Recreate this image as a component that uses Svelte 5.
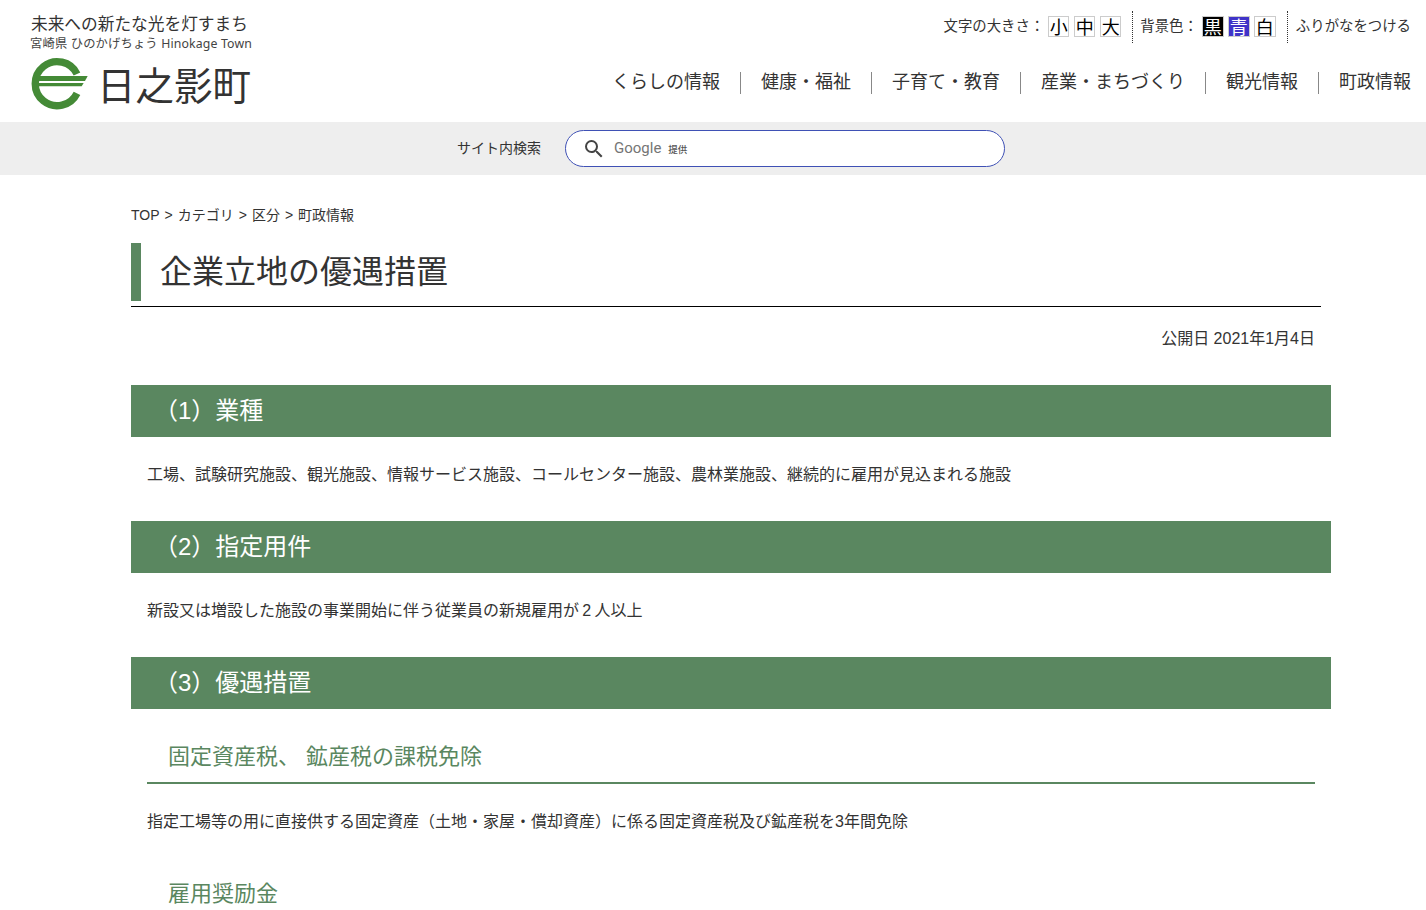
<script lang="ts">
    const sizes = ["小", "中", "大"];
    const colors = [
        { label: "黒", cls: "black" },
        { label: "青", cls: "blue" },
        { label: "白", cls: "white" },
    ];
    const nav = ["くらしの情報", "健康・福祉", "子育て・教育", "産業・まちづくり", "観光情報", "町政情報"];
    const crumbs = ["TOP", "カテゴリ", "区分", "町政情報"];
</script>

<header class="header">
    <div class="brand">
        <p class="tagline">未来への新たな光を灯すまち</p>
        <p class="town">宮崎県 ひのかげちょう Hinokage Town</p>
        <div class="logo">
            <svg class="mark" viewBox="0 0 210 186" aria-hidden="true">
                <path d="M156 66A66 66 0 1 0 156 124" fill="none" stroke="#448a36" stroke-width="22" />
                <polygon points="35,72 188,72 180,87 35,87" fill="#448a36" />
                <polygon points="35,93 176,93 170,103 35,103" fill="#448a36" />
            </svg>
            <span class="wordmark">日之影町</span>
        </div>
    </div>
    <div class="header-right">
        <div class="tools">
            <div class="tool-group">
                <span class="tool-label">文字の大きさ：</span>
                <div class="size-btns">
                    {#each sizes as s}
                        <span class="tool-btn">{s}</span>
                    {/each}
                </div>
            </div>
            <div class="tool-group dotted">
                <span class="tool-label">背景色：</span>
                <div class="color-btns">
                    {#each colors as c}
                        <span class="tool-btn {c.cls}">{c.label}</span>
                    {/each}
                </div>
            </div>
            <div class="tool-group dotted">
                <span class="tool-label">ふりがなをつける</span>
            </div>
        </div>
        <nav class="nav">
            {#each nav as item}
                <span class="nav-item">{item}</span>
            {/each}
        </nav>
    </div>
</header>

<div class="searchbar">
    <span class="search-label">サイト内検索</span>
    <div class="search-box">
        <svg class="search-icon" viewBox="0 0 24 24" aria-hidden="true">
            <path d="M15.5 14h-.79l-.28-.27A6.47 6.47 0 0 0 16 9.5 6.5 6.5 0 1 0 9.5 16c1.61 0 3.09-.59 4.23-1.57l.27.28v.79l5 4.99L20.49 19l-4.99-5zm-6 0C7.01 14 5 11.99 5 9.5S7.01 5 9.5 5 14 7.01 14 9.5 11.99 14 9.5 14z" />
        </svg>
        <span class="google">Google</span>
        <span class="provided">提供</span>
    </div>
</div>

<main class="main">
    <div class="breadcrumb">
        {#each crumbs as c, i}
            {#if i > 0}<span class="sep">&gt;</span>{/if}
            <span>{c}</span>
        {/each}
    </div>

    <h1 class="title"><span>企業立地の優遇措置</span></h1>
    <p class="date">公開日 2021年1月4日</p>

    <h2 class="section first">（1）業種</h2>
    <p class="body">工場、試験研究施設、観光施設、情報サービス施設、コールセンター施設、農林業施設、継続的に雇用が見込まれる施設</p>

    <h2 class="section">（2）指定用件</h2>
    <p class="body tight">新設又は増設した施設の事業開始に伴う従業員の新規雇用が 2 人以上</p>

    <h2 class="section">（3）優遇措置</h2>
    <h3 class="sub">固定資産税、 鉱産税の課税免除</h3>
    <p class="body">指定工場等の用に直接供する固定資産（土地・家屋・償却資産）に係る固定資産税及び鉱産税を3年間免除</p>
    <h3 class="sub">雇用奨励金</h3>
</main>

<style>
    :global(body) {
        margin: 0;
        background: #fff;
        color: #333;
        font-family: "Liberation Sans", "Noto Sans CJK JP", sans-serif;
        font-size: 16px;
        height: 910px;
        overflow: hidden;
    }

    p,
    h1,
    h2,
    h3 {
        margin: 0;
        font-weight: 400;
    }

    .header {
        display: flex;
        justify-content: space-between;
        height: 122px;
        padding: 0 15px 0 30px;
    }

    .brand {
        padding-top: 14px;
    }

    .tagline {
        margin-left: 1px;
        padding-top: 1px;
        font-size: 16.7px;
        line-height: 19px;
    }

    .town {
        font-family: "Noto Sans", "Noto Sans CJK JP", sans-serif;
        font-size: 12.3px;
        line-height: 18px;
        margin-top: 1px;
        color: #444;
        letter-spacing: 0.15px;
    }

    .logo {
        display: flex;
        align-items: center;
        margin-top: -1px;
        height: 62px;
    }

    .mark {
        width: 70px;
        height: 62px;
        margin-left: -5px;
    }

    .wordmark {
        font-size: 38.5px;
        line-height: 1;
        margin-left: 2px;
        font-family: "Noto Sans CJK JP", sans-serif;
        font-weight: 400;
    }

    .header-right {
        display: flex;
        flex-direction: column;
        align-items: flex-end;
    }

    .tools {
        display: flex;
        align-items: center;
        height: 32px;
        margin-top: 11px;
    }

    .tool-group {
        display: flex;
        align-items: center;
        box-sizing: border-box;
        height: 32px;
        padding-bottom: 2px;
        font-size: 14.4px;
    }

    .tool-label {
        padding-bottom: 4px;
    }

    .dotted {
        margin-left: 11px;
        padding-left: 7px;
        border-left: 1px dotted #333;
    }

    .dotted:last-child {
        padding-left: 8px;
    }

    .size-btns,
    .color-btns {
        display: flex;
        gap: 5px;
        margin-left: 4px;
    }

    .color-btns {
        gap: 4px;
    }

    .tool-btn {
        display: flex;
        align-items: center;
        justify-content: center;
        box-sizing: border-box;
        width: 21px;
        height: 21px;
        border: 1px solid #ccc;
        font-size: 18px;
        color: #000;
    }

    .color-btns .tool-btn {
        width: 22px;
    }

    .tool-btn.black {
        background: #000;
        color: #fff;
    }

    .tool-btn.blue {
        background: #3f33c8;
        color: #fff;
    }

    .nav {
        display: flex;
        align-items: center;
        margin-top: 29px;
    }

    .nav-item {
        font-size: 18px;
        line-height: 20px;
        padding: 0 20px 2px;
        border-left: 1px solid #888;
    }

    .nav-item:first-child {
        border-left: none;
    }

    .nav-item:last-child {
        padding-right: 0;
    }

    .searchbar {
        display: flex;
        align-items: center;
        height: 53px;
        padding-left: 457px;
        background: #eee;
    }

    .search-label {
        font-size: 14px;
        width: 108px;
        padding-bottom: 3px;
    }

    .search-box {
        display: flex;
        align-items: center;
        box-sizing: border-box;
        width: 440px;
        height: 37px;
        padding-left: 16px;
        background: #fff;
        border: 1px solid #3f51b5;
        border-radius: 19px;
    }

    .search-icon {
        width: 24px;
        height: 24px;
        fill: #444;
    }

    .google {
        margin-left: 8px;
        padding-bottom: 2px;
        font-family: Roboto, sans-serif;
        font-size: 15px;
        color: #757575;
    }

    .provided {
        margin-left: 7px;
        font-size: 9.5px;
        font-weight: 500;
        color: #555;
    }

    .main {
        width: 1200px;
        margin-left: 131px;
    }

    .breadcrumb {
        display: flex;
        gap: 5px;
        padding-top: 31px;
        font-size: 14px;
        line-height: 18px;
    }

    .title {
        width: 1190px;
        margin-top: 19px;
        padding-bottom: 5px;
        border-bottom: 1px solid #000;
    }

    .title span {
        display: block;
        padding-left: 19px;
        border-left: 10px solid #5a8760;
        font-size: 32px;
        line-height: 58px;
    }

    .date {
        width: 1184px;
        margin-top: 21px;
        text-align: right;
        line-height: 22px;
    }

    .section {
        margin-top: 36px;
        height: 52px;
        padding-left: 23px;
        background: #5a8760;
        color: #fff;
        font-size: 24px;
        line-height: 52px;
    }

    .section.first {
        margin-top: 35px;
    }

    .body {
        margin: 28px 16px 0;
        line-height: 20px;
    }

    .tight {
        word-spacing: -1.2px;
    }

    .section + .sub {
        margin-top: 30px;
    }

    .sub {
        margin: 0 16px;
        padding: 0 0 7px 21px;
        border-bottom: 2px solid #5a8760;
        color: #5a8760;
        font-size: 22px;
        line-height: 36px;
    }

    .body + .sub {
        margin-top: 44px;
    }
</style>
